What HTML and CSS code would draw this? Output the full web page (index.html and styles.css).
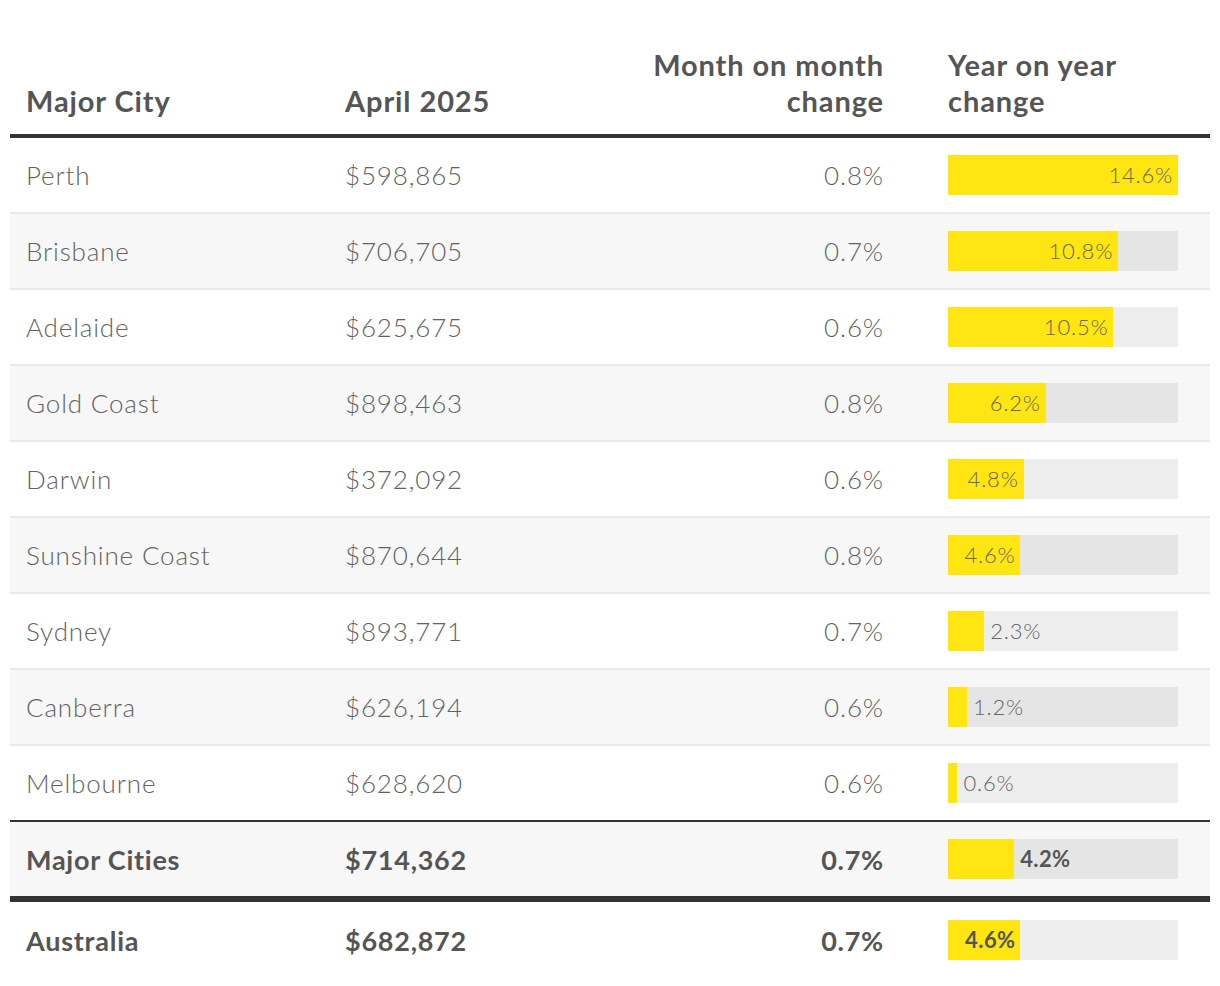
FILE: index.html
```html
<!DOCTYPE html>
<html lang="en">
<head>
<meta charset="utf-8">
<title>Major City home values</title>
<link rel="stylesheet" href="styles.css">
</head>
<body>
<div class="wrap">
<table class="tbl">
  <colgroup>
    <col class="c1"><col class="c2"><col class="c3"><col class="c4">
  </colgroup>
  <thead>
    <tr>
      <th>Major City</th>
      <th>April 2025</th>
      <th class="num">Month on month change</th>
      <th class="yoy-h">Year on year change</th>
    </tr>
  </thead>
  <tbody>
    <tr><td>Perth</td><td>$598,865</td><td class="num">0.8%</td><td class="yoy"><div class="bar"><div class="fill" style="width:100%"><span class="lbl">14.6%</span></div></div></td></tr>
    <tr class="alt"><td>Brisbane</td><td>$706,705</td><td class="num">0.7%</td><td class="yoy"><div class="bar"><div class="fill" style="width:73.97%"><span class="lbl">10.8%</span></div></div></td></tr>
    <tr><td>Adelaide</td><td>$625,675</td><td class="num">0.6%</td><td class="yoy"><div class="bar"><div class="fill" style="width:71.92%"><span class="lbl">10.5%</span></div></div></td></tr>
    <tr class="alt"><td>Gold Coast</td><td>$898,463</td><td class="num">0.8%</td><td class="yoy"><div class="bar"><div class="fill" style="width:42.47%"><span class="lbl">6.2%</span></div></div></td></tr>
    <tr><td>Darwin</td><td>$372,092</td><td class="num">0.6%</td><td class="yoy"><div class="bar"><div class="fill" style="width:32.88%"><span class="lbl">4.8%</span></div></div></td></tr>
    <tr class="alt"><td>Sunshine Coast</td><td>$870,644</td><td class="num">0.8%</td><td class="yoy"><div class="bar"><div class="fill" style="width:31.51%"><span class="lbl">4.6%</span></div></div></td></tr>
    <tr><td>Sydney</td><td>$893,771</td><td class="num">0.7%</td><td class="yoy"><div class="bar"><div class="fill" style="width:15.75%"></div><span class="lbl out">2.3%</span></div></td></tr>
    <tr class="alt"><td>Canberra</td><td>$626,194</td><td class="num">0.6%</td><td class="yoy"><div class="bar"><div class="fill" style="width:8.22%"></div><span class="lbl out">1.2%</span></div></td></tr>
    <tr class="last"><td>Melbourne</td><td>$628,620</td><td class="num">0.6%</td><td class="yoy"><div class="bar"><div class="fill" style="width:4.11%"></div><span class="lbl out">0.6%</span></div></td></tr>
    <tr class="alt total"><td>Major Cities</td><td>$714,362</td><td class="num">0.7%</td><td class="yoy"><div class="bar"><div class="fill" style="width:28.77%"></div><span class="lbl out">4.2%</span></div></td></tr>
    <tr class="nat"><td>Australia</td><td>$682,872</td><td class="num">0.7%</td><td class="yoy"><div class="bar"><div class="fill" style="width:31.51%"><span class="lbl">4.6%</span></div></div></td></tr>
  </tbody>
</table>
</div>
</body>
</html>
```

FILE: styles.css
```css
html, body {
  margin: 0;
  padding: 0;
  background: #ffffff;
}
body {
  font-family: Lato, "Open Sans", "Liberation Sans", sans-serif;
  color: #555555;
}
.wrap {
  padding: 0 10px;
}
.tbl {
  width: 1200px;
  border-collapse: separate;
  border-spacing: 0;
  table-layout: fixed;
}
.c1 { width: 319px; }
.c2 { width: 290px; }
.c3 { width: 280px; }
.c4 { width: 311px; }

.tbl th {
  height: 138px;
  box-sizing: border-box;
  vertical-align: bottom;
  text-align: left;
  font-size: 29px;
  letter-spacing: 0.9px;
  line-height: 36px;
  font-weight: 700;
  color: #555555;
  padding: 0 16px 15px 16px;
  border-bottom: 4px solid #333333;
}
.tbl th.num { text-align: right; padding-right: 15px; }
.tbl th.yoy-h { padding-left: 49px; padding-right: 40px; }

.tbl td {
  height: 74px;
  padding: 0 16px;
  font-size: 26px;
  letter-spacing: 0.85px;
  font-weight: 300;
  color: #636363;
  vertical-align: middle;
  border-bottom: 2px solid #e9e9e9;
  white-space: nowrap;
}
.tbl td.num { text-align: right; padding-right: 15px; }
.tbl td.yoy { padding: 0 32px 0 49px; }

.tbl tr.alt td { background: #f7f7f7; }
.tbl tr.last td { border-bottom: none; }
.tbl tr.total td {
  border-top: 2px solid #333333;
  border-bottom: 6px solid #333333;
  font-weight: 700;
  font-size: 27px;
  letter-spacing: 0.75px;
  color: #555555;
}
.tbl tr.nat td {
  height: 76px;
  border-bottom: none;
  font-weight: 700;
  font-size: 27px;
  letter-spacing: 0.75px;
  color: #555555;
}

.bar {
  display: flex;
  align-items: center;
  height: 40px;
  width: 230px;
  background: rgba(0, 0, 0, 0.07);
}
.fill {
  height: 40px;
  background: #ffe512;
  display: flex;
  align-items: center;
  justify-content: flex-end;
  box-sizing: border-box;
  padding-right: 5px;
}
.lbl {
  font-size: 22px;
  letter-spacing: 0.8px;
  font-weight: 300;
  color: #666666;
  line-height: 40px;
}
.lbl.out { margin-left: 6px; }
.total .lbl, .nat .lbl {
  font-size: 22px;
  font-weight: 700;
  letter-spacing: 0.4px;
  color: #555555;
}
.fill:empty { padding-right: 0; }
```
